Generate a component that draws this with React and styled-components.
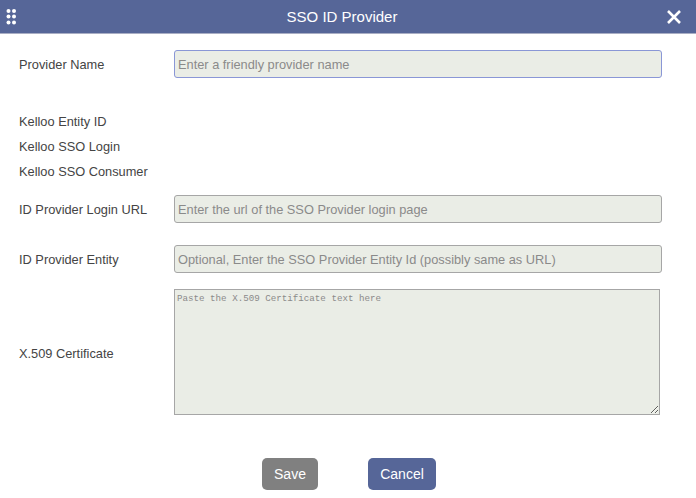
import React from "react";
import styled, { createGlobalStyle } from "styled-components";

const GlobalStyle = createGlobalStyle`
  html, body {
    margin: 0;
    padding: 0;
    background: #fff;
    font-family: "Liberation Sans", Arial, sans-serif;
  }
`;

const Dialog = styled.div`
  width: 696px;
  height: 498px;
  overflow: hidden;
  display: flex;
  flex-direction: column;
  color: #444;
  font-size: 12.8px;
`;

const Header = styled.div`
  height: 33px;
  flex: none;
  display: flex;
  align-items: center;
  justify-content: space-between;
  padding: 0 14px 0 6px;
  background: #566698;
  border-bottom: 1px solid #a9aec4;
  position: relative;
`;

const Title = styled.div`
  position: absolute;
  left: 0;
  right: 12px;
  text-align: center;
  color: #fff;
  font-size: 15px;
`;

const Form = styled.div`
  padding: 16px 34px 0 19px;
  display: flex;
  flex-direction: column;
`;

const Row = styled.div`
  display: grid;
  grid-template-columns: 155px 1fr;
  align-items: center;
  margin-top: ${(p) => p.$top || 0}px;
`;

const InfoRow = styled.div`
  height: 25px;
  line-height: 25px;
`;

const InfoBlock = styled.div`
  margin-top: 31px;
  margin-bottom: 11px;
`;

const Label = styled.label`
  color: #444;
  padding-top: ${(p) => p.$nudge || 0}px;
`;

const Input = styled.input`
  box-sizing: border-box;
  width: 100%;
  height: 28px;
  padding: 0 3px;
  border: 1px solid ${(p) => (p.$active ? "#8a97d6" : "#a6a6a6")};
  border-radius: 3px;
  background: #eaede6;
  font: 12.8px "Liberation Sans", Arial, sans-serif;
  outline: none;
  &::placeholder {
    color: #8a8a8a;
    opacity: 1;
  }
`;

const Certificate = styled.textarea`
  box-sizing: border-box;
  display: block;
  width: 486px;
  height: 126px;
  padding: 3px 2px 2px;
  border: 1px solid #a6a6a6;
  background: #eaede6;
  font: 9.2px "Liberation Mono", "Courier New", monospace;
  outline: none;
  resize: vertical;
  &::placeholder {
    color: #8a8a8a;
    opacity: 1;
  }
`;

const Buttons = styled.div`
  display: flex;
  gap: 50px;
  margin: 43px 0 0 243px;
`;

const Button = styled.button`
  height: 32px;
  width: ${(p) => p.$width}px;
  padding: 0;
  border: none;
  border-radius: 5px;
  background: ${(p) => p.$bg};
  color: #fff;
  font: 14px "Liberation Sans", Arial, sans-serif;
`;

const GripIcon = () => (
  <svg width="12" height="16" viewBox="0 0 12 16" fill="#fff">
    {[2, 7.5, 13.5].map((cy) =>
      [2.5, 8].map((cx) => <circle key={`${cx}-${cy}`} cx={cx} cy={cy} r="2" />)
    )}
  </svg>
);

const CloseIcon = () => (
  <svg width="16" height="16" viewBox="0 0 16 16" stroke="#fff" strokeWidth="2.6" fill="none">
    <path d="M2 2 L14 14 M14 2 L2 14" />
  </svg>
);

export default function App() {
  return (
    <>
      <GlobalStyle />
      <Dialog>
        <Header>
          <GripIcon />
          <Title>SSO ID Provider</Title>
          <CloseIcon />
        </Header>
        <Form>
          <Row>
            <Label>Provider Name</Label>
            <Input $active placeholder="Enter a friendly provider name" />
          </Row>
          <InfoBlock>
            <InfoRow>Kelloo Entity ID</InfoRow>
            <InfoRow>Kelloo SSO Login</InfoRow>
            <InfoRow>Kelloo SSO Consumer</InfoRow>
          </InfoBlock>
          <Row>
            <Label>ID Provider Login URL</Label>
            <Input placeholder="Enter the url of the SSO Provider login page" />
          </Row>
          <Row $top={22}>
            <Label>ID Provider Entity</Label>
            <Input placeholder="Optional, Enter the SSO Provider Entity Id (possibly same as URL)" />
          </Row>
          <Row $top={16}>
            <Label $nudge={2}>X.509 Certificate</Label>
            <Certificate placeholder="Paste the X.509 Certificate text here" />
          </Row>
          <Buttons>
            <Button $width={56} $bg="#808080">Save</Button>
            <Button $width={68} $bg="#566698">Cancel</Button>
          </Buttons>
        </Form>
      </Dialog>
    </>
  );
}
